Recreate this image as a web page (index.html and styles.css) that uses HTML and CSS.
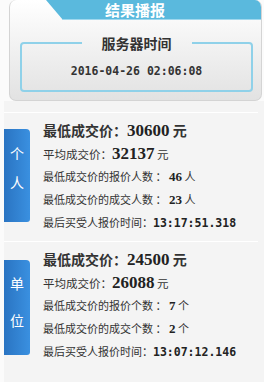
FILE: index.html
```html
<!DOCTYPE html>
<html lang="zh-CN">
<head>
    <meta charset="UTF-8">
    <meta name="viewport" content="width=device-width, initial-scale=1.0">
    <title>结果播报</title>
    <link rel="stylesheet" href="styles.css">
</head>
<body>
    <div class="broadcast">
        <div class="broadcast-tab">结果播报</div>
        <fieldset class="server-time">
            <legend>服务器时间</legend>
            <div class="server-time-value">2016-04-26 02:06:08</div>
        </fieldset>
    </div>

    <div class="results">
        <div class="result">
            <div class="result-tag">个<br>人</div>
            <ul class="result-list">
                <li class="row-main">最低成交价：<b class="num">30600</b>&nbsp;元</li>
                <li class="row-avg">平均成交价：<b class="num">32137</b>&nbsp;元</li>
                <li>最低成交价的报价人数&nbsp;：&nbsp;<b class="num num-small">46</b>&nbsp;人</li>
                <li>最低成交价的成交人数&nbsp;：&nbsp;<b class="num num-small">23</b>&nbsp;人</li>
                <li>最后买受人报价时间：<b class="time">13:17:51.318</b></li>
            </ul>
        </div>
        <div class="result">
            <div class="result-tag result-tag-unit">单<br>位</div>
            <ul class="result-list">
                <li class="row-main">最低成交价：<b class="num">24500</b>&nbsp;元</li>
                <li class="row-avg">平均成交价：<b class="num">26088</b>&nbsp;元</li>
                <li>最低成交价的报价个数&nbsp;：&nbsp;<b class="num num-small">7</b>&nbsp;个</li>
                <li>最低成交价的成交个数&nbsp;：&nbsp;<b class="num num-small">2</b>&nbsp;个</li>
                <li>最后买受人报价时间：<b class="time">13:07:12.146</b></li>
            </ul>
        </div>
    </div>
</body>
</html>
```

FILE: styles.css
```css
body {
    font-family: "Noto Sans CJK SC", sans-serif;
    background-color: #fbfbfb;
    color: #333;
    margin: 0;
}

/* Верхняя панель */
.broadcast {
    margin-left: 9px;
    width: 253px;
    height: 101px;
    box-sizing: border-box;
    border: 1px solid #d4d4d4;
    border-top: none;
    border-radius: 7px;
    background: linear-gradient(#ffffff, #e2e2e2);
    overflow: hidden;
}

.broadcast-tab {
    margin-left: 36px;
    height: 20px;
    padding-right: 37px;
    box-sizing: border-box;
    background-color: #5ab9dd;
    border-bottom: 1px solid #9fd8ee;
    clip-path: polygon(0 0, 100% 0, 100% 100%, 17px 100%);
    color: #fff;
    font-size: 15px;
    font-weight: bold;
    line-height: 19px;
    text-align: center;
}

.server-time {
    margin: 14px 0 0 10px;
    width: 233px;
    height: 58px;
    box-sizing: border-box;
    padding: 10px 0 0;
    border: 2px solid #8fd1e9;
    border-radius: 4px;
    text-align: center;
}

.server-time legend {
    margin: 0 auto;
    padding: 0 20px;
    font-size: 14px;
    font-weight: bold;
    line-height: 18px;
    color: #333;
}

.server-time-value {
    font-family: "DejaVu Sans Mono", monospace;
    font-size: 11.5px;
    font-weight: bold;
    line-height: 18px;
    color: #333;
}

/* Результаты */
.results {
    margin-left: 4px;
    padding-top: 11px;
    background-color: #f4f4f4;
    min-height: 270px;
}

.result {
    display: flex;
    align-items: flex-start;
    margin-right: 6px;
    padding: 6px 0 7px;
    border-top: 1px solid #fff;
}

.result-tag {
    flex: none;
    width: 26px;
    height: 93px;
    margin: 10px 13px 0 0;
    padding-top: 10px;
    box-sizing: border-box;
    background: linear-gradient(to right, #2a74c2, #3a90e0);
    border-radius: 0 4px 3px 0;
    color: #fff;
    font-size: 14px;
    line-height: 29px;
    text-align: center;
}

.result-tag-unit {
    height: 95px;
    margin-top: 12px;
    padding-top: 5px;
    line-height: 37px;
}

.result-list {
    list-style: none;
    margin: 0;
    padding: 0;
}

.result-list li {
    height: 23px;
    line-height: 23px;
    font-size: 11px;
    white-space: nowrap;
}

.result-list .row-main {
    font-size: 14px;
    font-weight: bold;
}

.result-list .row-avg {
    font-size: 11.5px;
}

.num {
    font-family: "Liberation Serif", serif;
    font-size: 17px;
    color: #222;
}

.num-small {
    font-size: 13px;
}

.time {
    font-family: "DejaVu Sans Mono", monospace;
    font-size: 11.5px;
    color: #222;
}
```
